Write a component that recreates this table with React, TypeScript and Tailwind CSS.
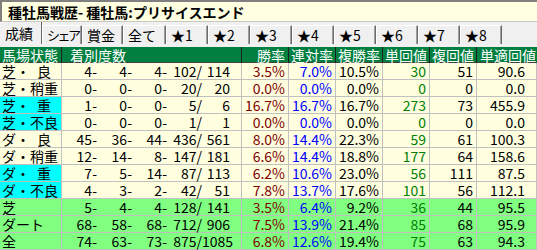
import React from "react";

type Row = {
  label: string;
  labelBg: "yellow" | "cyan" | "green";
  counts: [string, string, string, string, string];
  win: string;
  ren: string;
  fuku: string;
  tan: string;
  fukuKai: string;
  tanTeki: string;
};

const rows: Row[] = [
  { label: "芝・\u2002良", labelBg: "yellow", counts: ["4-", "4-", "4-", "102/", "114"], win: "3.5%", ren: "7.0%", fuku: "10.5%", tan: "30", fukuKai: "51", tanTeki: "90.6" },
  { label: "芝・稍重", labelBg: "yellow", counts: ["0-", "0-", "0-", "20/", "20"], win: "0.0%", ren: "0.0%", fuku: "0.0%", tan: "0", fukuKai: "0", tanTeki: "0.0" },
  { label: "芝・\u2002重", labelBg: "cyan", counts: ["1-", "0-", "0-", "5/", "6"], win: "16.7%", ren: "16.7%", fuku: "16.7%", tan: "273", fukuKai: "73", tanTeki: "455.9" },
  { label: "芝・不良", labelBg: "cyan", counts: ["0-", "0-", "0-", "1/", "1"], win: "0.0%", ren: "0.0%", fuku: "0.0%", tan: "0", fukuKai: "0", tanTeki: "0.0" },
  { label: "ダ・\u2002良", labelBg: "yellow", counts: ["45-", "36-", "44-", "436/", "561"], win: "8.0%", ren: "14.4%", fuku: "22.3%", tan: "59", fukuKai: "61", tanTeki: "100.3" },
  { label: "ダ・稍重", labelBg: "yellow", counts: ["12-", "14-", "8-", "147/", "181"], win: "6.6%", ren: "14.4%", fuku: "18.8%", tan: "177", fukuKai: "64", tanTeki: "158.6" },
  { label: "ダ・\u2002重", labelBg: "cyan", counts: ["7-", "5-", "14-", "87/", "113"], win: "6.2%", ren: "10.6%", fuku: "23.0%", tan: "56", fukuKai: "111", tanTeki: "87.5" },
  { label: "ダ・不良", labelBg: "cyan", counts: ["4-", "3-", "2-", "42/", "51"], win: "7.8%", ren: "13.7%", fuku: "17.6%", tan: "101", fukuKai: "56", tanTeki: "112.1" },
  { label: "芝", labelBg: "green", counts: ["5-", "4-", "4-", "128/", "141"], win: "3.5%", ren: "6.4%", fuku: "9.2%", tan: "36", fukuKai: "44", tanTeki: "95.5" },
  { label: "ダート", labelBg: "green", counts: ["68-", "58-", "68-", "712/", "906"], win: "7.5%", ren: "13.9%", fuku: "21.4%", tan: "85", fukuKai: "68", tanTeki: "95.9" },
  { label: "全", labelBg: "green", counts: ["74-", "63-", "73-", "875/", "1085"], win: "6.8%", ren: "12.6%", fuku: "19.4%", tan: "75", fukuKai: "63", tanTeki: "94.3" },
];

const tabs = [
  { name: "成績", w: "w-[42px]", text: "" },
  { name: "シェア", w: "w-[40px]", text: "text-[13px] tracking-[-2.5px]" },
  { name: "賞金", w: "w-[41px]", text: "" },
  { name: "全て", w: "w-[43px]", text: "" },
  { name: "★1", w: "w-[42px]", text: "" },
  { name: "★2", w: "w-[42px]", text: "" },
  { name: "★3", w: "w-[42px]", text: "" },
  { name: "★4", w: "w-[42px]", text: "" },
  { name: "★5", w: "w-[42px]", text: "" },
  { name: "★6", w: "w-[42px]", text: "" },
  { name: "★7", w: "w-[42px]", text: "" },
  { name: "★8", w: "w-[42px]", text: "" },
];

const cols = "grid grid-cols-[62px_180px_47px_47px_47px_47px_47px_60px]";
const countWidths = ["w-[35px]", "w-[35px]", "w-[35px]", "w-[35px]", "w-[28px]"];

export default function App() {
  return (
    <div className="w-[537px] h-[250px] overflow-hidden bg-[#f0f0f0] text-[14px] leading-[16px] text-black [font-family:'Noto_Sans_CJK_JP',sans-serif]">
      {/* title */}
      <div className="h-[22px] border-t-2 border-l-2 border-[#808080] border-b border-b-[#c8c8c8] bg-[#ffffe1] pl-[6px] flex items-center">
        <span className="text-[14px] font-bold whitespace-nowrap">種牡馬戦歴- 種牡馬:プリサイスエンド</span>
      </div>

      {/* tabs */}
      <div className="h-[25px] flex items-start">
        {tabs.map((tab, i) =>
          i === 0 ? (
            <div key={tab.name} className={`${tab.w} h-[22px] pl-[5px] border-r border-[#696969] whitespace-nowrap flex items-center`}>
              {tab.name}
            </div>
          ) : (
            <div
              key={tab.name}
              className={`${tab.w} h-[19px] mt-[3px] pl-[5px] border-r border-[#696969] border-t border-t-white shadow-[inset_-1px_0_0_#a0a0a0,inset_1px_0_0_#ffffff] whitespace-nowrap flex items-center`}
            >
              <span className={tab.text}>{tab.name}</span>
            </div>
          )
        )}
      </div>

      {/* table */}
      <div className="bg-[#ffffe0]">
        <div className={`${cols} h-[16px] bg-[#008040] text-white border-b border-[#404040]`}>
          <div className="pl-[2px] border-r border-[#202020] whitespace-nowrap">馬場状態</div>
          <div className="pl-[8px] border-r border-[#202020] whitespace-nowrap">着別度数</div>
          <div className="pr-[3px] text-right border-r border-[#202020] whitespace-nowrap">勝率</div>
          <div className="pr-[2px] text-right border-r border-[#202020] whitespace-nowrap">連対率</div>
          <div className="pr-[2px] text-right border-r border-[#202020] whitespace-nowrap">複勝率</div>
          <div className="pr-[2px] text-right border-r border-[#202020] whitespace-nowrap">単回値</div>
          <div className="pr-[2px] text-right border-r border-[#202020] whitespace-nowrap">複回値</div>
          <div className="pr-[1px] text-right whitespace-nowrap">単適回値</div>
        </div>
        {rows.map((r) => {
          const rowBg = r.labelBg === "green" ? "bg-[#80ff80]" : "bg-[#ffffe0]";
          const labelBg = r.labelBg === "cyan" ? "bg-[#00ffff]" : rowBg;
          const cell = "border-r border-b border-[#c0c0c0] whitespace-nowrap";
          return (
            <div key={r.label} className={`${cols} h-[17px] ${rowBg}`}>
              <div className={`${cell} ${labelBg} pl-[2px]`}>{r.label}</div>
              <div className={`${cell} flex`}>
                {r.counts.map((c, i) => (
                  <span key={i} className={`${countWidths[i]} text-right`}>
                    {c}
                  </span>
                ))}
              </div>
              <div className={`${cell} text-right pr-[3px] text-[#800000]`}>{r.win}</div>
              <div className={`${cell} text-right pr-[3px] text-[#0000ff]`}>{r.ren}</div>
              <div className={`${cell} text-right pr-[3px]`}>{r.fuku}</div>
              <div className={`${cell} text-right pr-[3px] text-[#008000]`}>{r.tan}</div>
              <div className={`${cell} text-right pr-[3px]`}>{r.fukuKai}</div>
              <div className={`${cell} text-right pr-[11px]`}>{r.tanTeki}</div>
            </div>
          );
        })}
      </div>
    </div>
  );
}
